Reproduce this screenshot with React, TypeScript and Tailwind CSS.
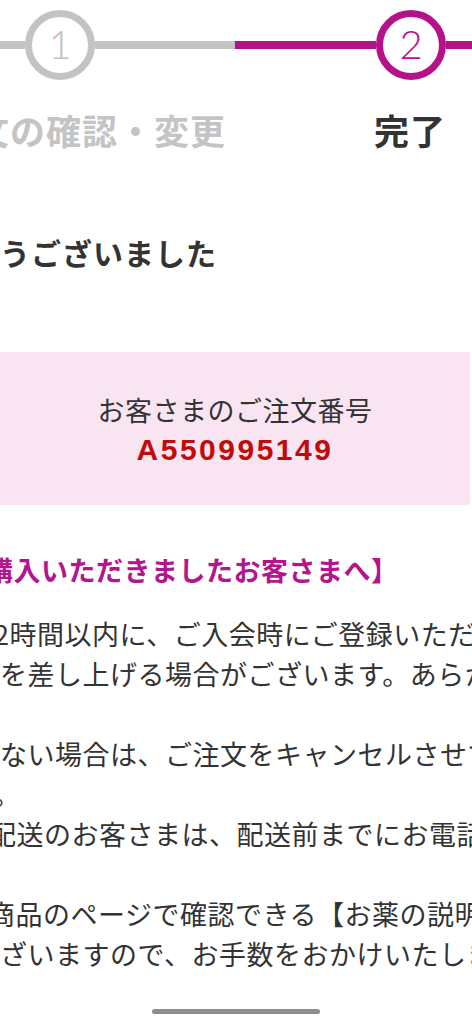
const jp = "font-['Noto_Sans_CJK_JP',sans-serif]";

const Circle = ({ n, active }: { n: string; active?: boolean }) => (
  <div
    className={`w-[70px] h-[70px] shrink-0 rounded-full border-[7px] bg-white flex items-center justify-center ${
      active ? "border-[#b5128a] text-[#b5128a]" : "border-[#c3c3c3] text-[#c3c3c3]"
    }`}
  >
    <span className="font-['Lato',sans-serif] font-light text-[40px] leading-none -mt-[2px]">{n}</span>
  </div>
);

export default function App() {
  return (
    <div className={`w-[472px] h-[1024px] overflow-hidden bg-white flex flex-col ${jp}`}>
      {/* stepper */}
      <div className="pt-[10px] flex items-center">
        <div className="w-[25px] h-[8px] bg-[#c3c3c3]" />
        <Circle n="1" />
        <div className="w-[140px] h-[8px] bg-[#c3c3c3]" />
        <div className="w-[141px] h-[8px] bg-[#b5128a]" />
        <Circle n="2" active />
        <div className="flex-1 h-[8px] bg-[#b5128a]" />
      </div>
      <div className="mt-[30px] flex items-center whitespace-nowrap">
        <div className="-ml-[26px] text-[35px] leading-[40px] font-bold tracking-[1px] text-[#c4c4c4]">
          文の確認・変更
        </div>
        <div className="ml-auto mr-[26px] w-[72px] text-center text-[35px] leading-[40px] font-bold tracking-[1px] text-[#333]">
          完了
        </div>
      </div>

      <h1 className="mt-[82px] whitespace-nowrap text-[30px] leading-[40px] font-bold tracking-[1px] text-[#333]">
        うございました
      </h1>

      {/* order number */}
      <div className="mt-[80px] w-[470px] bg-[#f9e5f2] pt-[38px] pb-[35px] flex flex-col items-center">
        <p className="text-[27px] leading-[40px] tracking-[0.5px] text-[#333]">お客さまのご注文番号</p>
        <p className="font-['Liberation_Sans',sans-serif] font-bold text-[30px] leading-[40px] tracking-[2.5px] text-[#c20a0a]">
          A550995149
        </p>
      </div>

      <h2 className="mt-[45px] -ml-[14px] whitespace-nowrap text-[27px] leading-[40px] font-bold tracking-[0.5px] text-[#b3168c]">
        購入いただきましたお客さまへ】
      </h2>

      <div className="mt-[24px] text-[27px] leading-[40px] tracking-[0.5px] text-[#333] whitespace-nowrap">
        <p className="-ml-[6px]">2時間以内に、ご入会時にご登録いただいたメールアドレス</p>
        <p>を差し上げる場合がございます。あらかじめご了承ください。</p>
        <p className="mt-[40px]">ない場合は、ご注文をキャンセルさせていただきます</p>
        <p className="-ml-[7px]">。</p>
        <p className="-ml-[11px]">配送のお客さまは、配送前までにお電話にてご連絡</p>
        <p className="mt-[40px] -ml-[12px]">商品のページで確認できる【お薬の説明書】</p>
        <p>ざいますので、お手数をおかけいたしますがご確認</p>
      </div>

      <div className="mt-[35px] ml-[152px] w-[168px] h-[5px] rounded-full bg-[#8e8e8e]" />
    </div>
  );
}
